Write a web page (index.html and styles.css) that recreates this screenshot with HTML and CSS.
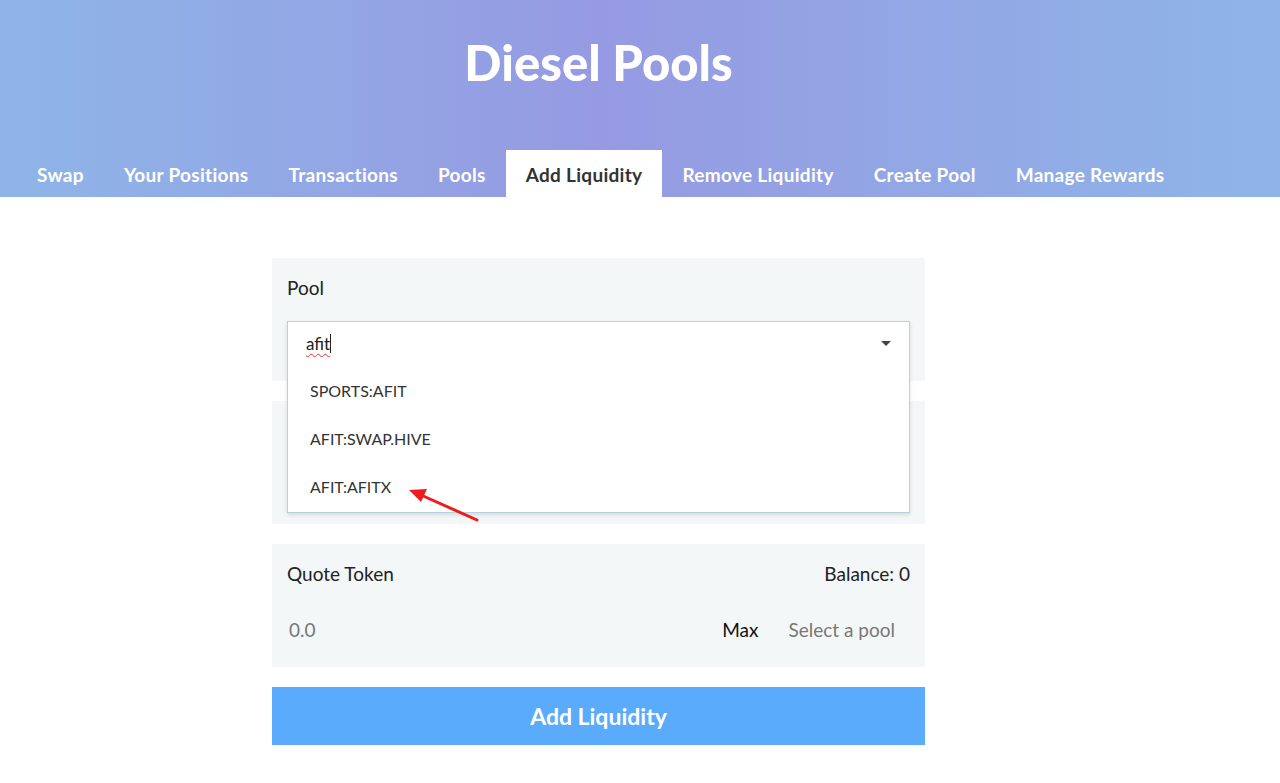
FILE: index.html
```html
<!DOCTYPE html>
<html lang="en">
<head>
    <meta charset="UTF-8">
    <meta name="viewport" content="width=device-width, initial-scale=1.0">
    <title>Diesel Pools</title>
    <link rel="stylesheet" href="styles.css">
</head>
<body>
    <div class="header">
        <h1 class="title">Diesel Pools</h1>
        <nav class="tabs">
            <a href="#">Swap</a>
            <a href="#">Your Positions</a>
            <a href="#">Transactions</a>
            <a href="#">Pools</a>
            <a href="#" class="active">Add Liquidity</a>
            <a href="#">Remove Liquidity</a>
            <a href="#">Create Pool</a>
            <a href="#">Manage Rewards</a>
        </nav>
    </div>

    <div class="main">
        <div class="form">
            <div class="panel pool-panel">
                <div class="label">Pool</div>
                <div class="select">
                    <div class="select-input">
                        <span class="typed">afit</span><span class="cursor"></span>
                        <span class="caret"></span>
                    </div>
                    <div class="options">
                        <div class="option">SPORTS:AFIT</div>
                        <div class="option">AFIT:SWAP.HIVE</div>
                        <div class="option">AFIT:AFITX</div>
                    </div>
                </div>
                <svg class="arrow" width="80" height="40" viewBox="0 0 80 40">
                    <line x1="72" y1="35" x2="16" y2="10" stroke="#ee1c1c" stroke-width="3" stroke-linecap="round"/>
                    <polygon points="4,5 22,4 16,17" fill="#ee1c1c"/>
                </svg>
            </div>
            <div class="panel"></div>
            <div class="panel">
                <div class="row">
                    <div class="label">Quote Token</div>
                    <div class="label">Balance: 0</div>
                </div>
                <div class="row amount-row">
                    <div class="placeholder">0.0</div>
                    <div class="amount-right">
                        <span class="max">Max</span>
                        <span class="placeholder">Select a pool</span>
                    </div>
                </div>
            </div>
            <button class="submit">Add Liquidity</button>
        </div>
    </div>
</body>
</html>
```

FILE: styles.css
```css
body {
    font-family: Lato, "Noto Sans", sans-serif;
    margin: 0;
    padding: 0;
    background-color: #ffffff;
    color: #222222;
}
.header {
    background: linear-gradient(90deg, #8eb5e8 0%, #969ae2 47%, #8eb5e8 100%);
    height: 197px;
    display: flex;
    flex-direction: column;
}
.title {
    margin: 0;
    padding-top: 35px;
    padding-right: 83px;
    height: 114px;
    box-sizing: border-box;
    text-align: center;
    color: #ffffff;
    font-size: 49px;
    font-weight: 900;
    line-height: 54px;
}
.tabs {
    display: flex;
    padding-left: 17px;
    height: 47px;
    margin-top: auto;
}
.tabs a {
    color: #ffffff;
    text-decoration: none;
    font-size: 19px;
    font-weight: 700;
    letter-spacing: 0.3px;
    padding: 0 20px;
    line-height: 49px;
}
.tabs a.active {
    background-color: #ffffff;
    color: #333333;
}
.main {
    padding: 61px 83px 0 0;
}
.form {
    width: 653px;
    margin: 0 auto;
    display: flex;
    flex-direction: column;
    gap: 20px;
}
.panel {
    background-color: #f4f7f8;
    height: 123px;
    padding: 19px 15px;
    box-sizing: border-box;
}
.pool-panel {
    position: relative;
    z-index: 1;
}
.label {
    font-size: 19px;
    line-height: 22px;
}
.select {
    position: absolute;
    left: 15px;
    top: 63px;
    width: 623px;
    background-color: #ffffff;
    border: 1px solid #b5d3dc;
    box-sizing: border-box;
    box-shadow: 0 2px 4px rgba(0, 0, 0, 0.12);
}
.select-input {
    display: flex;
    align-items: center;
    height: 42px;
    padding: 0 18px;
    font-size: 17px;
}
.typed {
    text-decoration: underline wavy #e03030;
    text-decoration-thickness: 1px;
    text-underline-offset: 3px;
}
.cursor {
    width: 1px;
    height: 19px;
    background-color: #222222;
}
.caret {
    margin-left: auto;
    border-left: 5px solid transparent;
    border-right: 5px solid transparent;
    border-top: 5px solid #444444;
}
.options {
    padding: 3px 0 1px;
}
.option {
    font-size: 16px;
    line-height: 48px;
    padding: 0 22px;
    color: #333333;
}
.arrow {
    position: absolute;
    left: 133px;
    top: 227px;
}
.row {
    display: flex;
    justify-content: space-between;
    align-items: center;
}
.amount-row {
    margin-top: 33px;
    padding: 0 15px 0 2px;
}
.amount-right {
    display: flex;
    gap: 30px;
}
.placeholder {
    color: #777777;
    font-size: 19px;
}
.max {
    font-size: 19px;
    color: #111111;
}
.submit {
    background-color: #5aabfb;
    color: #ffffff;
    border: none;
    height: 58px;
    font-family: inherit;
    font-size: 23px;
    font-weight: 700;
    cursor: pointer;
}
```
